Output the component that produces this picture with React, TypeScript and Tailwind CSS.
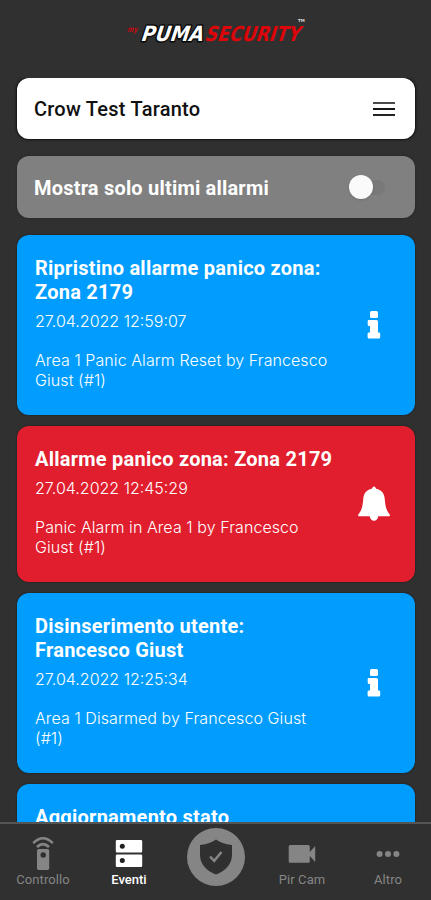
import React, { useState } from "react";

type EventKind = "info" | "alarm";

interface AlarmEvent {
  id: number;
  kind: EventKind;
  title: string[];
  date: string;
  description: string[];
}

const events: AlarmEvent[] = [
  {
    id: 1,
    kind: "info",
    title: ["Ripristino allarme panico zona:", "Zona 2179"],
    date: "27.04.2022 12:59:07",
    description: ["Area 1 Panic Alarm Reset by Francesco", "Giust (#1)"],
  },
  {
    id: 2,
    kind: "alarm",
    title: ["Allarme panico zona: Zona 2179"],
    date: "27.04.2022 12:45:29",
    description: ["Panic Alarm in Area 1 by Francesco", "Giust (#1)"],
  },
  {
    id: 3,
    kind: "info",
    title: ["Disinserimento utente:", "Francesco Giust"],
    date: "27.04.2022 12:25:34",
    description: ["Area 1 Disarmed by Francesco Giust", "(#1)"],
  },
  {
    id: 4,
    kind: "info",
    title: ["Aggiornamento stato"],
    date: "",
    description: [],
  },
];

const Logo: React.FC = () => (
  <svg
    width="190"
    height="48"
    viewBox="0 0 190 48"
    className="font-['DejaVu_Sans',sans-serif] font-bold"
  >
    <g transform="translate(6 26) skewX(-18)">
      <text fontSize="8" textLength="10" lengthAdjust="spacingAndGlyphs" fill="#c4090d">
        my
      </text>
    </g>
    <g transform="translate(19 34.5) skewX(-18)">
      <text
        fontSize="21"
        textLength="62"
        lengthAdjust="spacingAndGlyphs"
        fill="#ffffff"
        stroke="#080808"
        strokeWidth="3"
        strokeLinejoin="round"
        paintOrder="stroke"
      >
        PUMA
      </text>
    </g>
    <g transform="translate(83 34.5) skewX(-18)">
      <text fontSize="20.5" textLength="95" lengthAdjust="spacingAndGlyphs" fill="#dc0509">
        SECURITY
      </text>
    </g>
    <text x="177" y="16" fontSize="4" fill="#dddddd">
      TM
    </text>
  </svg>
);

const InfoIcon: React.FC = () => (
  <svg width="14" height="28" viewBox="0 0 14 28" fill="#ffffff">
    <rect x="3" y="0" width="8" height="7" rx="1.5" />
    <path d="M1.5 9H9.5Q11 9 11 10.5V21.5H12Q13.2 21.5 13.2 22.8V26Q13.2 27.5 11.8 27.5H2Q.6 27.5.6 26V22.8Q.6 21.5 2 21.5H3V15H2Q.7 15 .7 13.7V10.3Q.7 9 1.5 9Z" />
  </svg>
);

const BellIcon: React.FC = () => (
  <svg width="32" height="36" viewBox="0 0 32 36" fill="#ffffff">
    <path d="M16 .5C17 .5 17.7 1.6 18.2 2.8C23.4 3.8 26.2 7.3 26.7 12.5C27.3 20 28.3 24.5 31.5 28.2C32.3 29.3 31.8 30.3 30.7 30.3H20.2C19.8 33.2 18.4 34.8 16 34.8C13.6 34.8 12.2 33.2 11.8 30.3H1.3C.2 30.3-.3 29.3.5 28.2C3.7 24.5 4.7 20 5.3 12.5C5.8 7.3 8.6 3.8 13.8 2.8C14.3 1.6 15 .5 16 .5Z" />
  </svg>
);

const RemoteIcon: React.FC = () => (
  <svg width="24" height="36" viewBox="0 0 24 36">
    <path d="M2.2 7.2Q12-2.8 21.8 7.2M6 11Q12 5 18 11" fill="none" stroke="#858585" strokeWidth="2.6" />
    <path d="M7.8 13H16.4Q18.2 13 18.2 14.8V32.2Q18.2 34 16.4 34H7.8Q6 34 6 32.2V14.8Q6 13 7.8 13Z" fill="#858585" />
    <circle cx="12.2" cy="19" r="2.7" fill="#303030" />
  </svg>
);

const EventsIcon: React.FC = () => (
  <svg width="28" height="28" viewBox="0 0 28 28">
    <path d="M2 0H26Q27.2 0 27.2 1.2V11.3Q27.2 12.5 26 12.5H2Q.8 12.5.8 11.3V1.2Q.8 0 2 0ZM2 14.5H26Q27.2 14.5 27.2 15.7V25.8Q27.2 27 26 27H2Q.8 27 .8 25.8V15.7Q.8 14.5 2 14.5Z" fill="#fff" />
    <circle cx="7.3" cy="6.3" r="2.5" fill="#202020" />
    <circle cx="7.3" cy="20.5" r="2.5" fill="#202020" />
  </svg>
);

const ShieldIcon: React.FC = () => (
  <svg width="34" height="38" viewBox="0 0 34 38">
    <path d="M17 1.5C21 4.5 26 6.3 33 7V17C33 26 26.5 33 17 36.5C7.5 33 1 26 1 17V7C8 6.3 13 4.5 17 1.5Z" fill="#303030" />
    <path d="M11 18.5L15.2 22.8L22.5 14" fill="none" stroke="#858585" strokeWidth="2.5" />
  </svg>
);

const CameraIcon: React.FC = () => (
  <svg width="28" height="20" viewBox="0 0 28 20" fill="#858585">
    <path d="M2 1H20.3Q21.8 1 21.8 2.5V8L27.2 2V18L21.8 12V17.2Q21.8 18.7 20.3 18.7H2Q.7 18.7.7 17.2V2.5Q.7 1 2 1Z" />
  </svg>
);

const MoreIcon: React.FC = () => (
  <svg width="24" height="8" viewBox="0 0 24 8" fill="#858585">
    <circle cx="3.6" cy="4" r="3" />
    <circle cx="12" cy="4" r="3" />
    <circle cx="20.4" cy="4" r="3" />
  </svg>
);

const EventCard: React.FC<{ event: AlarmEvent }> = ({ event }) => (
  <div
    className={`flex items-center rounded-xl pt-[20.6px] pr-[23px] pb-[24.5px] pl-[18px] text-white shadow-[0_0_2px_#181818] ${
      event.kind === "alarm" ? "bg-[#e11e2d]" : "bg-[#009dff]"
    }`}
  >
    <div className="min-w-0 flex-1 whitespace-nowrap">
      <h2 className="text-[20px] leading-6 font-bold tracking-[0.24px]">
        {event.title.map((line) => (
          <div key={line}>{line}</div>
        ))}
      </h2>
      <div className="mt-[7.5px] h-5 font-['Inter',sans-serif] text-[16px] leading-5 font-light">
        {event.date}
      </div>
      <div className="mt-5 font-['Inter',sans-serif] text-[16px] leading-[19.75px] font-light tracking-[0.08px]">
        {event.description.map((line) => (
          <div key={line}>{line}</div>
        ))}
      </div>
    </div>
    <div className="flex w-9 shrink-0 justify-center pt-[3px]">
      {event.kind === "alarm" ? <BellIcon /> : <InfoIcon />}
    </div>
  </div>
);

interface NavItemProps {
  label: string;
  icon: React.ReactNode;
  active?: boolean;
}

const NavItem: React.FC<NavItemProps> = ({ label, icon, active }) => (
  <button
    className={`flex w-[86px] flex-col items-center text-[13px] leading-4 whitespace-nowrap ${
      active ? "font-medium text-white" : "tracking-[0.1px] text-[#858585]"
    }`}
  >
    <span className="flex h-9 items-center">{icon}</span>
    <span>{label}</span>
  </button>
);

const App: React.FC = () => {
  const [onlyLatest, setOnlyLatest] = useState(false);

  return (
    <div className="flex h-[900px] w-[431px] flex-col overflow-hidden bg-[#303030] font-['Roboto',sans-serif]">
      <header className="flex h-[78px] shrink-0 justify-center pt-[6px]">
        <Logo />
      </header>

      <main className="flex min-h-0 flex-1 flex-col overflow-hidden pr-4 pl-[17px]">
        <div className="flex h-[61px] shrink-0 items-center justify-between rounded-xl bg-white pr-5 pl-[17px] shadow-[0_0_2px_1px_#111]">
          <span className="text-[20px] font-medium tracking-[0.25px] text-[#101010]">
            Crow Test Taranto
          </span>
          <button className="flex w-[22px] flex-col gap-1" aria-label="Menu">
            <span className="h-[2px] bg-[#4b4b4b]" />
            <span className="h-[2px] bg-[#161616]" />
            <span className="h-[2px] bg-[#242424]" />
          </button>
        </div>

        <div className="mt-[17px] flex h-[62px] shrink-0 items-center justify-between rounded-xl bg-[#808080] pr-[30px] pl-[17px] shadow-[0_0_2px_#222]">
          <span className="pt-[2px] text-[20px] font-bold tracking-[0.2px] text-white">
            Mostra solo ultimi allarmi
          </span>
          <button
            role="switch"
            aria-checked={onlyLatest}
            onClick={() => setOnlyLatest(!onlyLatest)}
            className={`flex h-[15px] w-[36px] items-center rounded-full bg-[#797979] ${
              onlyLatest ? "justify-end" : ""
            }`}
          >
            <span className="size-6 shrink-0 rounded-full bg-[#fafafa] shadow-sm" />
          </button>
        </div>

        <div className="mt-[17px] flex flex-col gap-[11px]">
          {events.map((event) => (
            <EventCard key={event.id} event={event} />
          ))}
        </div>
      </main>

      <nav className="flex h-[78px] shrink-0 justify-between border-t-2 border-[#555555] bg-[#303030]">
        <div className="flex w-[172px] pt-3">
          <NavItem label="Controllo" icon={<RemoteIcon />} />
          <NavItem label="Eventi" icon={<EventsIcon />} active />
        </div>
        <button
          className="mt-1 flex size-[58px] items-center justify-center rounded-full bg-[#858585]"
          aria-label="Home"
        >
          <ShieldIcon />
        </button>
        <div className="flex w-[172px] pt-3">
          <NavItem label="Pir Cam" icon={<CameraIcon />} />
          <NavItem label="Altro" icon={<MoreIcon />} />
        </div>
      </nav>
    </div>
  );
};

export default App;
